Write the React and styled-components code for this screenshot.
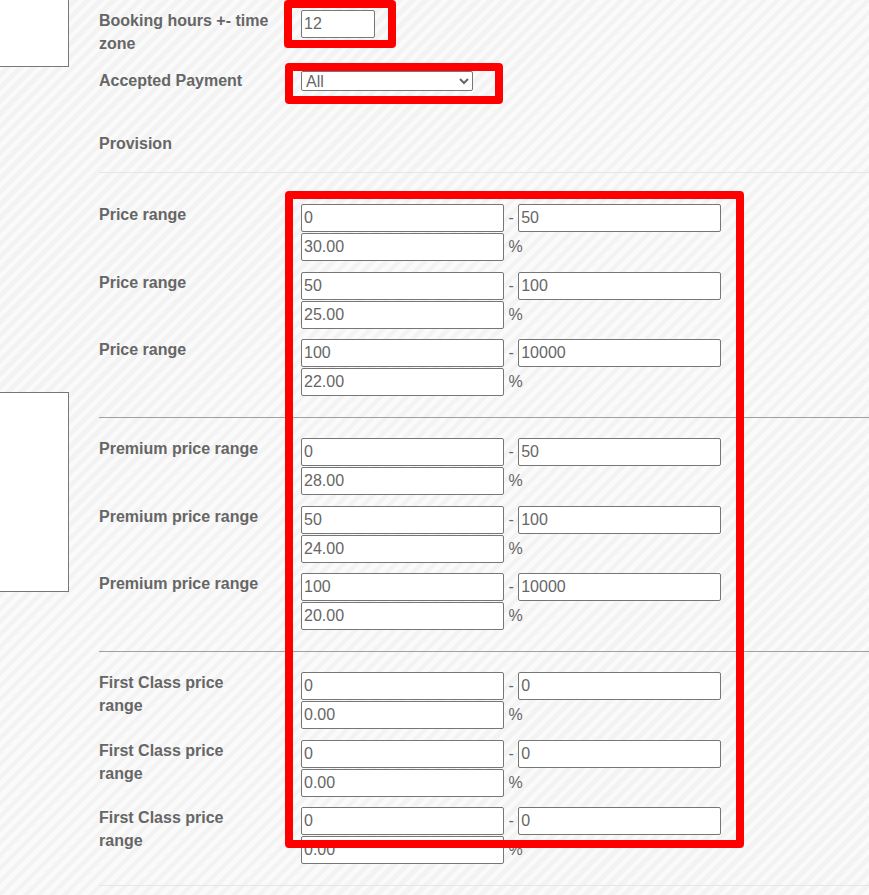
import styled, { createGlobalStyle } from 'styled-components';

const GlobalStyle = createGlobalStyle`
  html, body {
    margin: 0;
    padding: 0;
  }
  body {
    background: repeating-linear-gradient(
      135deg,
      #fafafa 0px,
      #fafafa 4.6px,
      #f3f3f3 4.6px,
      #f3f3f3 9.2px
    );
    font-family: 'Liberation Sans', Arial, sans-serif;
    overflow: hidden;
  }
`;

const sections = [
  {
    label: 'Price range',
    top: 31,
    line: '#a0a0a0',
    rows: [
      ['0', '50', '30.00'],
      ['50', '100', '25.00'],
      ['100', '10000', '22.00']
    ]
  },
  {
    label: 'Premium price range',
    top: 20,
    line: '#a0a0a0',
    rows: [
      ['0', '50', '28.00'],
      ['50', '100', '24.00'],
      ['100', '10000', '20.00']
    ]
  },
  {
    label: 'First Class price range',
    top: 20,
    line: '#e6e6e6',
    rows: [
      ['0', '0', '0.00'],
      ['0', '0', '0.00'],
      ['0', '0', '0.00']
    ]
  }
];

const marks = [
  { x: 284, y: 0, w: 112, h: 48 },
  { x: 285, y: 63, w: 218, h: 41 },
  { x: 285, y: 191, w: 459, h: 657 }
];

export default function App() {
  return (
    <>
      <GlobalStyle />
      <Page>
        <LeftCol>
          <SideBox $height={67} $first />
          <SideBox $height={200} $gap={325} />
        </LeftCol>

        <Main>
          <FieldRow $top={10}>
            <Label>Booking hours +- time zone</Label>
            <div>
              <TextInput defaultValue="12" $width={74} />
            </div>
          </FieldRow>

          <FieldRow $top={15}>
            <Label>Accepted Payment</Label>
            <div>
              <Select defaultValue="all">
                <option value="all">All</option>
                <option value="cash">Cash</option>
                <option value="card">Card</option>
              </Select>
            </div>
          </FieldRow>

          <Heading>Provision</Heading>

          {sections.map((section, i) => (
            <Section key={i} $top={section.top} $line={section.line}>
              {section.rows.map((row, key) => (
                <FieldRow key={key}>
                  <Label>{section.label}</Label>
                  <Ranges>
                    <RangeLine>
                      <TextInput defaultValue={row[0]} />
                      <Joiner> - </Joiner>
                      <TextInput defaultValue={row[1]} />
                    </RangeLine>
                    <RangeLine>
                      <TextInput defaultValue={row[2]} />
                      <Joiner> %</Joiner>
                    </RangeLine>
                  </Ranges>
                </FieldRow>
              ))}
            </Section>
          ))}
        </Main>

        {marks.map((m, key) => (
          <Mark key={key} $x={m.x} $y={m.y} $w={m.w} $h={m.h} />
        ))}
      </Page>
    </>
  );
}

const Page = styled.div`
  position: relative;
  display: flex;
  min-height: 895px;
`;

const LeftCol = styled.div`
  width: 69px;
  flex-shrink: 0;
  display: flex;
  flex-direction: column;
`;

const SideBox = styled.div`
  box-sizing: border-box;
  height: ${p => p.$height}px;
  margin-top: ${p => p.$gap || 0}px;
  background: #fff;
  border: 1px solid #777;
  border-left: none;
  ${p => p.$first && 'border-top: none;'}
`;

const Main = styled.div`
  flex: 1;
  margin-left: 30px;
  display: flex;
  flex-direction: column;
`;

const FieldRow = styled.div`
  display: grid;
  grid-template-columns: 175px 1fr;
  column-gap: 27px;
  align-items: start;
  margin-top: ${p => p.$top || 0}px;
`;

const Label = styled.div`
  max-width: 170.5px;
  margin-top: -1px;
  font-size: 16px;
  line-height: 23px;
  font-weight: bold;
  color: #666;
`;

const Heading = styled(Label)`
  max-width: none;
  margin-top: 40px;
  padding-bottom: 17px;
  border-bottom: 1px solid #e6e6e6;
`;

const Section = styled.div`
  display: flex;
  flex-direction: column;
  gap: 10.5px;
  padding: ${p => p.$top}px 0 21px;
  border-bottom: 1px solid ${p => p.$line};
`;

const Ranges = styled.div`
  display: flex;
  flex-direction: column;
  gap: 1px;
`;

const RangeLine = styled.div`
  display: flex;
  align-items: center;
`;

const TextInput = styled.input.attrs({ type: 'text' })`
  box-sizing: border-box;
  width: ${p => p.$width || 203}px;
  height: 28px;
  margin: 0;
  padding: 1px 2px;
  border: 1px solid #767676;
  border-radius: 2px;
  background: #fff;
  font-family: 'Liberation Sans', Arial, sans-serif;
  font-size: 16px;
  color: #666;
  outline: none;
`;

const Select = styled.select`
  box-sizing: border-box;
  width: 172px;
  height: 20px;
  margin: 1px 0 0;
  border: 1px solid #767676;
  border-radius: 2px;
  background: #fff;
  font-family: 'Liberation Sans', Arial, sans-serif;
  font-size: 16px;
  color: #666;
`;

const Joiner = styled.span`
  white-space: pre;
  font-size: 16px;
  color: #666;
`;

const Mark = styled.div`
  position: absolute;
  left: ${p => p.$x}px;
  top: ${p => p.$y}px;
  width: ${p => p.$w}px;
  height: ${p => p.$h}px;
  box-sizing: border-box;
  border: 8px solid #ff0000;
  border-radius: 4px;
  pointer-events: none;
  z-index: 2;
`;
